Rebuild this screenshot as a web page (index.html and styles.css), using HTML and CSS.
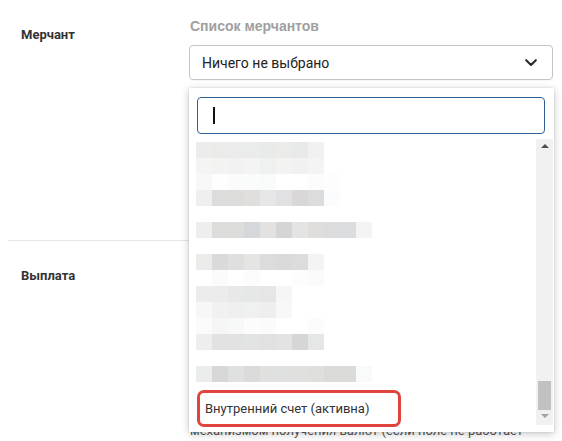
FILE: index.html
```html
<!DOCTYPE html>
<html lang="ru">
<head>
<meta charset="utf-8">
<title>Мерчант</title>
<link rel="stylesheet" href="styles.css">
</head>
<body>
<div class="form">
  <div class="row row-merchant">
    <div class="label label-merchant">Мерчант</div>
    <div class="field">
      <div class="caption">Список мерчантов</div>
      <div class="select-wrap">
        <div class="select">
          <span class="select-text">Ничего не выбрано</span>
          <svg class="chev" width="12" height="8" viewBox="0 0 12 8"><path d="M1.2 1.2 L6 6 L10.8 1.2" fill="none" stroke="#2b2b2b" stroke-width="2.1" stroke-linecap="round" stroke-linejoin="round"/></svg>
        </div>
        <div class="panel">
          <div class="search"><span class="caret"></span></div>
          <div class="list">
            <div class="items">
              <div class="px-row"><i style="background:#ececec"></i><i style="background:#ebebea"></i><i style="background:#ebebeb"></i><i style="background:#eaebeb"></i><i style="background:#e9eaea"></i><i style="background:#ebebea"></i><i style="background:#e8e9e9"></i><i style="background:#f1f1f1"></i></div>
              <div class="px-row"><i style="background:#f4f4f4"></i><i style="background:#f3f3f2"></i><i style="background:#f2f2f2"></i><i style="background:#f4f4f4"></i><i style="background:#eff0f0"></i><i style="background:#f4f3f2"></i><i style="background:#f1f1f1"></i><i style="background:#f4f4f4"></i></div>
              <div class="px-row"><i style="background:#f8f8f8"></i><i style="background:#fefefe"></i><i style="background:#fbfbfb"></i><i style="background:#fafbfb"></i><i style="background:#f9fafa"></i><i style="background:#ffffff"></i><i style="background:#ffffff"></i><i style="background:#fcfcfc"></i><i style="background:#fdfdfe"></i></div>
              <div class="px-row"><i style="background:#f0efef"></i><i style="background:#dcdcdc"></i><i style="background:#dcdcdb"></i><i style="background:#e0dfdd"></i><i style="background:#e5e7e7"></i><i style="background:#e1e1e3"></i><i style="background:#d9d8d6"></i><i style="background:#dcdcdc"></i><i style="background:#fbfcfe"></i></div>
              <div class="px-row"></div>
              <div class="px-row"><i style="background:#eeeeee"></i><i style="background:#dcdcdb"></i><i style="background:#dcdcdb"></i><i style="background:#d5d8db"></i><i style="background:#e3e2e0"></i><i style="background:#d3d5d7"></i><i style="background:#e4e4e2"></i><i style="background:#dfdedc"></i><i style="background:#dbdcde"></i><i style="background:#dbdcde"></i><i style="background:#f4f4f4"></i></div>
              <div class="px-row"></div>
              <div class="px-row"><i style="background:#ebebea"></i><i style="background:#d9dad9"></i><i style="background:#dfdfdf"></i><i style="background:#e5e5e3"></i><i style="background:#dcdcdc"></i><i style="background:#dadada"></i><i style="background:#dcdcdc"></i><i style="background:#f4f4f4"></i></div>
              <div class="px-row"><i style="background:#ffffff"></i><i style="background:#fbfbfb"></i><i style="background:#ffffff"></i><i style="background:#fcfcfc"></i><i style="background:#ffffff"></i><i style="background:#ffffff"></i><i style="background:#fdfdfd"></i><i style="background:#fbfbfb"></i></div>
              <div class="px-row"><i style="background:#ececec"></i><i style="background:#ececec"></i><i style="background:#e9e8e8"></i><i style="background:#e6e8e8"></i><i style="background:#e6e6e6"></i><i style="background:#f6f6f6"></i></div>
              <div class="px-row"><i style="background:#f7f7f7"></i><i style="background:#f1f1f1"></i><i style="background:#efefef"></i><i style="background:#eff0f0"></i><i style="background:#eeeeee"></i><i style="background:#f8f8f8"></i></div>
              <div class="px-row"><i style="background:#fbfbfb"></i><i style="background:#f6f6f6"></i><i style="background:#f7f8f8"></i><i style="background:#fcfcfc"></i><i style="background:#fbfbfb"></i><i style="background:#ffffff"></i><i style="background:#ffffff"></i><i style="background:#fcfcfc"></i></div>
              <div class="px-row"><i style="background:#eeeeee"></i><i style="background:#e2e2e2"></i><i style="background:#e3e2e2"></i><i style="background:#e2e3e3"></i><i style="background:#e1e1e1"></i><i style="background:#e3e3e3"></i><i style="background:#d6d6d6"></i><i style="background:#e5e7e7"></i></div>
              <div class="px-row"></div>
              <div class="px-row"><i style="background:#ebeded"></i><i style="background:#d8d7d7"></i><i style="background:#dfe0e0"></i><i style="background:#dcdadb"></i><i style="background:#e0e0de"></i><i style="background:#dfe1e1"></i><i style="background:#e0e0de"></i><i style="background:#dfdfdd"></i><i style="background:#dbdbd9"></i><i style="background:#dbdbd9"></i><i style="background:#f9fafc"></i></div>
              <div class="option-active">Внутренний счет (активна)</div>
            </div>
            <div class="scrollbar">
              <span class="arrow-up"></span>
              <span class="track-space"></span>
              <span class="thumb"></span>
              <span class="arrow-down"></span>
            </div>
          </div>
        </div>
      </div>
    </div>
  </div>
  <div class="row row-payout">
    <div class="label label-payout">Выплата</div>
    <div class="field field-payout">
      <p class="hint">механизмом получения валют (если поле не работает</p>
    </div>
  </div>
</div>
</body>
</html>
```

FILE: styles.css
```css
html, body {
  margin: 0;
  padding: 0;
  background: #fff;
  overflow: hidden;
  height: 441px;
}
body {
  font-family: Roboto, "Liberation Sans", Arial, sans-serif;
  color: #333;
}
.form {
  padding-left: 8px;
  width: 545px;
}
.row {
  display: grid;
  grid-template-columns: 181px 1fr;
}
.row-merchant {
  border-bottom: 1px solid #e6e6e6;
  padding-top: 18px;
  box-sizing: content-box;
  height: 222px;
}
.label {
  padding-left: 13px;
  font-size: 13px;
  font-weight: 700;
  line-height: 16px;
  color: #333;
}
.label-merchant {
  padding-top: 9px;
}
.caption {
  font-family: "Liberation Sans", Arial, sans-serif;
  font-size: 14px;
  font-weight: 700;
  line-height: 16px;
  color: #a0a0a0;
  padding-left: 1px;
  margin-bottom: 11px;
}
.select-wrap {
  position: relative;
  width: 364px;
}
.select {
  height: 35px;
  box-sizing: border-box;
  border: 1px solid #c4c4c4;
  border-radius: 4px;
  display: flex;
  align-items: center;
  justify-content: space-between;
  padding: 0 15px 0 12px;
  box-shadow: 0 1px 1px rgba(0,0,0,0.04);
}
.select-text {
  font-size: 14px;
  color: #222;
}
.chev {
  display: block;
  margin-top: 1px;
}
.panel {
  position: absolute;
  left: 0;
  top: 43px;
  width: 365px;
  height: 344px;
  box-sizing: border-box;
  background: #fff;
  box-shadow: 0 2px 8px rgba(0,0,0,0.22), 0 0 2px rgba(0,0,0,0.12);
  padding: 9px 1px 0 7px;
  display: flex;
  flex-direction: column;
  z-index: 5;
}
.search {
  height: 37px;
  width: 348px;
  margin-left: 1px;
  box-sizing: border-box;
  border: 1px solid #2e5f94;
  border-radius: 4px;
  padding: 9px 0 0 15px;
}
.caret {
  display: block;
  width: 2px;
  height: 17px;
  background: #111;
}
.list {
  display: flex;
  margin-top: 5px;
}
.items {
  flex: 1;
  padding-top: 3px;
}
.px-row {
  height: 16px;
  display: flex;
}
.px-row i {
  display: block;
  width: 16px;
  height: 16px;
}
.option-active {
  margin-top: 8px;
  margin-left: 1px;
  width: 204px;
  height: 37px;
  box-sizing: border-box;
  border: 3px solid #e0443d;
  border-radius: 7px;
  padding-left: 5px;
  display: flex;
  align-items: center;
  font-size: 13px;
  color: #333;
}
.scrollbar {
  width: 17px;
  height: 286px;
  background: #f1f1f1;
  display: flex;
  flex-direction: column;
  align-items: center;
}
.arrow-up {
  margin-top: 5px;
  width: 0;
  height: 0;
  border-left: 4px solid transparent;
  border-right: 4px solid transparent;
  border-bottom: 4px solid #505050;
}
.track-space {
  flex: 1;
}
.thumb {
  width: 13px;
  height: 29px;
  background: #c1c1c1;
}
.arrow-down {
  margin: 4px 0 7px;
  width: 0;
  height: 0;
  border-left: 4px solid transparent;
  border-right: 4px solid transparent;
  border-top: 4px solid #a3a3a3;
}
.row-payout {
  padding-top: 26px;
}
.label-payout {
  padding-top: 1px;
}
.field-payout {
  padding-top: 155px;
}
.hint {
  margin: 0;
  font-size: 13px;
  line-height: 17px;
  color: #555;
  padding-left: 1px;
  white-space: nowrap;
}
```
